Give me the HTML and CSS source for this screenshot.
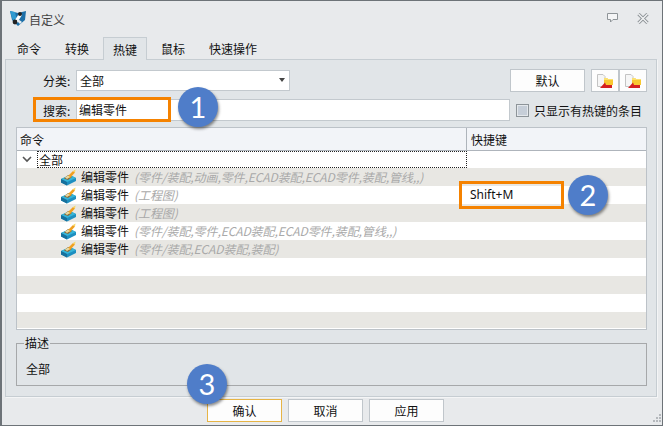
FILE: index.html
```html
<!DOCTYPE html>
<html lang="zh">

<head>
    <meta charset="UTF-8">
    <title>自定义</title>
    <link rel="stylesheet" href="styles.css">
</head>

<body>

    <!-- 图标 -->
    <svg class="defs" width="0" height="0">
        <symbol id="cmd" viewBox="0 0 17 17">
            <path d="M1 10 L10 6 L16 9 L16 12 L7 16.5 L1 13.5 Z" fill="#1e8fc0" />
            <path d="M1 10 L10 6 L16 9 L7 13 Z" fill="#35b5d8" />
            <path d="M1 10 L7 13 L7 16.5 L1 13.5 Z" fill="#17709c" />
            <path d="M4 9.5 L8 6 L12 8 L8 11 Z" fill="#8a6a3a" />
            <path d="M7 8 L13 2 L15 3.5 L10 9 Z" fill="#f0a020" />
            <path d="M13 2 L15.5 0.5 L15 3.5 Z" fill="#f8d860" />
            <path d="M5 8.5 L8 6.5 L10 8 L7 10 Z" fill="#e8d8a0" />
        </symbol>
        <symbol id="open" viewBox="0 0 18 16">
            <path d="M1.5 1.5 H7 L9 3.5 V13.5 H1.5 Z" fill="#f6f6f6" stroke="#c4c4c4" />
            <path d="M8 5 H11 L12 6 H17 V12 H8 Z" fill="#f8c830" />
            <path d="M8 5 H11 L12 6 H17 V7 H8 Z" fill="#fbe070" />
            <path d="M4 15 L9 9.5 L10 12 L16 12 V15 Z" fill="#d42020" />
        </symbol>
    </svg>

    <div class="window">
        <div class="titlebar">
            <svg class="app-icon" width="18" height="18" viewBox="0 0 18 18">
                <path d="M1 2 L9 4 L17 2 L16 11 L9 17 L3 11 Z" fill="#1c6fa8" />
                <path d="M1 2 L6 3 L8 12 L4 12 Z" fill="#2f9ad0" />
                <path d="M11 3 L6 11 L5 15 L8 14 L13 6 Z" fill="#fff" />
                <circle cx="6" cy="13" r="2.4" fill="#222" />
                <circle cx="11" cy="5" r="2" fill="#222" />
                <path d="M9 10 L13 13 L11 15 L8 12 Z" fill="#e8eef2" />
            </svg>
            <span class="title">自定义</span>
            <svg class="win-btn" width="13" height="12" viewBox="0 0 13 12">
                <path d="M1.5 1.5 H11.5 V7.5 H7 L4.5 10 V7.5 H1.5 Z" fill="#f4f5f6" stroke="#8e9498" />
            </svg>
            <svg class="win-btn close" width="12" height="11" viewBox="0 0 12 11">
                <path d="M1.5 1 L10.5 10 M10.5 1 L1.5 10" stroke="#8e9498" stroke-width="3.2" />
                <path d="M1.5 1 L10.5 10 M10.5 1 L1.5 10" stroke="#f2f3f4" stroke-width="1.4" />
            </svg>
        </div>

        <div class="tabs">
            <div class="tab">命令</div>
            <div class="tab">转换</div>
            <div class="tab active">热键</div>
            <div class="tab">鼠标</div>
            <div class="tab">快速操作</div>
        </div>

        <div class="panel">
            <div class="row row-top">
                <span class="label">分类:</span>
                <div class="combo">全部<span class="caret"></span></div>
                <button class="btn btn-default">默认</button>
                <button class="btn btn-icon"><svg width="18" height="16"><use href="#open" /></svg></button>
                <button class="btn btn-icon"><svg width="18" height="16"><use href="#open" /></svg></button>
            </div>

            <div class="row row-search">
                <span class="label">搜索:</span>
                <div class="search-input">编辑零件</div>
                <span class="check"></span>
                <span class="check-text">只显示有热键的条目</span>
            </div>

            <div class="table">
                <div class="table-head">
                    <div class="th">命令</div>
                    <div class="th">快捷键</div>
                </div>
                <div class="tr root">
                    <svg class="arrow" width="10" height="7" viewBox="0 0 10 7">
                        <path d="M1 1 L5 5 L9 1" fill="none" stroke="#555" stroke-width="1.6" />
                    </svg>
                    <div class="root-name">全部</div>
                </div>
                <div class="tr odd">
                    <div class="cell"><svg class="cmd-icon" width="17" height="17"><use href="#cmd" /></svg><span class="name">编辑零件</span><i class="scope">(零件/装配,动画,零件,ECAD装配,ECAD零件,装配,管线,,)</i></div>
                </div>
                <div class="tr">
                    <div class="cell"><svg class="cmd-icon" width="17" height="17"><use href="#cmd" /></svg><span class="name">编辑零件</span><i class="scope">(工程图)</i></div>
                    <div class="key">Shift+M</div>
                </div>
                <div class="tr odd">
                    <div class="cell"><svg class="cmd-icon" width="17" height="17"><use href="#cmd" /></svg><span class="name">编辑零件</span><i class="scope">(工程图)</i></div>
                </div>
                <div class="tr">
                    <div class="cell"><svg class="cmd-icon" width="17" height="17"><use href="#cmd" /></svg><span class="name">编辑零件</span><i class="scope">(零件/装配,零件,ECAD装配,ECAD零件,装配,管线,,)</i></div>
                </div>
                <div class="tr odd">
                    <div class="cell"><svg class="cmd-icon" width="17" height="17"><use href="#cmd" /></svg><span class="name">编辑零件</span><i class="scope">(零件/装配,ECAD装配,装配)</i></div>
                </div>
                <div class="tr"></div>
                <div class="tr odd"></div>
                <div class="tr"></div>
                <div class="tr odd last"></div>
            </div>

            <fieldset class="desc">
                <legend>描述</legend>
                <div class="desc-text">全部</div>
            </fieldset>
        </div>

        <div class="footer">
            <button class="btn btn-foot focus">确认</button>
            <button class="btn btn-foot">取消</button>
            <button class="btn btn-foot">应用</button>
        </div>

        <svg class="grip" width="11" height="11" viewBox="0 0 11 11">
            <path d="M8 0h2v2H8z M5 3h2v2H5z M8 3h2v2H8z M2 6h2v2H2z M5 6h2v2H5z M8 6h2v2H8z" fill="#b4b8bc" />
        </svg>

        <!-- 标注 -->
        <div class="mark mark-search"></div>
        <div class="mark mark-key"></div>
        <div class="badge badge-1">1</div>
        <div class="badge badge-2">2</div>
        <div class="badge badge-3">3</div>
    </div>

</body>

</html>
```

FILE: styles.css
```css
* {
    box-sizing: border-box;
}

body {
    margin: 0;
    font-family: "Noto Sans CJK SC", "Noto Sans", sans-serif;
    font-size: 12px;
    color: #111;
}

.defs {
    position: absolute;
}

.window {
    position: relative;
    width: 663px;
    height: 426px;
    background-color: #e8eaec;
    border: 1px solid #6d7378;
    border-left-width: 2px;
    display: flex;
    flex-direction: column;
}

.titlebar {
    height: 36px;
    padding: 0 5px 0 7px;
    display: flex;
    align-items: center;
}

.app-icon {
    margin-right: 2px;
    margin-top: -3px;
}

.title {
    color: #444;
    flex: 1;
}

.win-btn {
    margin-left: 18px;
    margin-top: -2px;
}

.close {
    margin-right: 8px;
}

.tabs {
    height: 22px;
    padding-left: 5px;
    display: flex;
    gap: 4px;
}

.tab {
    padding: 0 10px;
    line-height: 24px;
}

.tab.active {
    background-color: #e1e5e8;
    border: 1px solid #c6cdd2;
    border-bottom: none;
    padding: 0 9px;
    height: 23px;
    position: relative;
    z-index: 1;
}

.panel {
    width: 652px;
    height: 338px;
    margin-left: 3px;
    background-color: #e1e5e8;
    border: 1px solid #c6cdd2;
    box-shadow: 1px 1px 0 #f4f5f6;
    padding: 9px 9px 0 10px;
}

.row {
    display: flex;
    align-items: center;
}

.row-top {
    height: 23px;
}

.row-search {
    height: 22px;
    margin-top: 7px;
}

.label {
    width: 60px;
    padding-left: 27px;
    white-space: nowrap;
}

.combo {
    position: relative;
    width: 214px;
    height: 21px;
    line-height: 19px;
    padding-left: 3px;
    background-color: #fff;
    border: 1px solid #c3c9ce;
}

.caret {
    position: absolute;
    right: 4px;
    top: 7px;
    border-left: 3px solid transparent;
    border-right: 3px solid transparent;
    border-top: 4px solid #444;
}

.btn {
    font-family: inherit;
    font-size: 12px;
    color: #111;
    background-color: #fdfdfd;
    border: 1px solid #c0c6cb;
    padding: 0;
}

.btn-default {
    width: 75px;
    height: 23px;
    margin-left: 220px;
}

.btn-icon {
    width: 28px;
    height: 23px;
    display: flex;
    align-items: center;
    justify-content: center;
}

.btn-default + .btn-icon {
    margin-left: 6px;
}

.search-input {
    width: 434px;
    height: 22px;
    line-height: 20px;
    padding-left: 2px;
    background-color: #fff;
    border: 1px solid #c3c9ce;
}

.check {
    width: 13px;
    height: 13px;
    margin-left: 6px;
    background-color: #c6ced8;
    border: 1px solid #8d9499;
    box-shadow: inset 0 0 0 1px #e4e8ec;
}

.check-text {
    margin-left: 5px;
    white-space: nowrap;
}

.table {
    width: 631px;
    height: 203px;
    margin-top: 6px;
    background-color: #fff;
    border: 1px solid #bcc2c8;
    display: flex;
    flex-direction: column;
}

.table-head {
    height: 23px;
    flex: none;
    display: grid;
    grid-template-columns: 449px 1fr;
    background-color: #f2f4f8;
    border-bottom: 1px solid #aeb4bb;
}

.th {
    line-height: 23px;
    padding-left: 3px;
}

.th + .th {
    border-left: 1px solid #aeb4bb;
    padding-left: 4px;
}

.tr {
    height: 18px;
    flex: none;
    display: grid;
    grid-template-columns: 449px 1fr;
}

.tr.odd {
    background-color: #e8e7e3;
}

.tr.last {
    height: 16px;
}

.tr.root {
    height: 17px;
    display: flex;
    align-items: center;
}

.arrow {
    margin-left: 5px;
    margin-right: 5px;
}

.root-name {
    width: 430px;
    height: 17px;
    line-height: 15px;
    padding-left: 1px;
    border: 1px dotted #222;
}

.cell {
    padding-left: 43px;
    line-height: 18px;
    display: flex;
    align-items: center;
    white-space: nowrap;
}

.cmd-icon {
    margin-right: 5px;
}

.name {
    margin-left: -1px;
}

.scope {
    margin-left: 5px;
    letter-spacing: -0.08px;
    color: #a9a9a9;
}

.key {
    padding-left: 4px;
    line-height: 18px;
    font-family: "Noto Sans", sans-serif;
}

.desc {
    width: 631px;
    height: 51px;
    margin: 5px 0 0;
    padding: 9px 0 0 9px;
    border: 1px solid #a6a8aa;
}

.desc legend {
    padding: 0 1px;
    margin-left: -2px;
    line-height: 16px;
}

.footer {
    padding: 2px 0 0 205px;
    display: flex;
    gap: 6px;
}

.btn-foot {
    width: 75px;
    height: 23px;
}

.btn-foot.focus {
    border-color: #e6b445;
}

.grip {
    position: absolute;
    right: 0;
    bottom: 0;
}

/* 标注 */
.mark {
    position: absolute;
    border: 3px solid #f58200;
}

.mark-search {
    left: 31px;
    top: 96px;
    width: 138px;
    height: 25px;
}

.mark-key {
    left: 457px;
    top: 180px;
    width: 105px;
    height: 28px;
}

.badge {
    position: absolute;
    width: 40px;
    height: 40px;
    border-radius: 50%;
    background-color: #4f7dc9;
    color: #fff;
    font-family: Lato, sans-serif;
    font-size: 29px;
    line-height: 40px;
    text-align: center;
    box-shadow: 1px 2px 3px rgba(0, 0, 0, 0.45);
}

.badge-1 {
    left: 176px;
    top: 86px;
}

.badge-2 {
    left: 566px;
    top: 174px;
}

.badge-3 {
    left: 185px;
    top: 363px;
}
```
